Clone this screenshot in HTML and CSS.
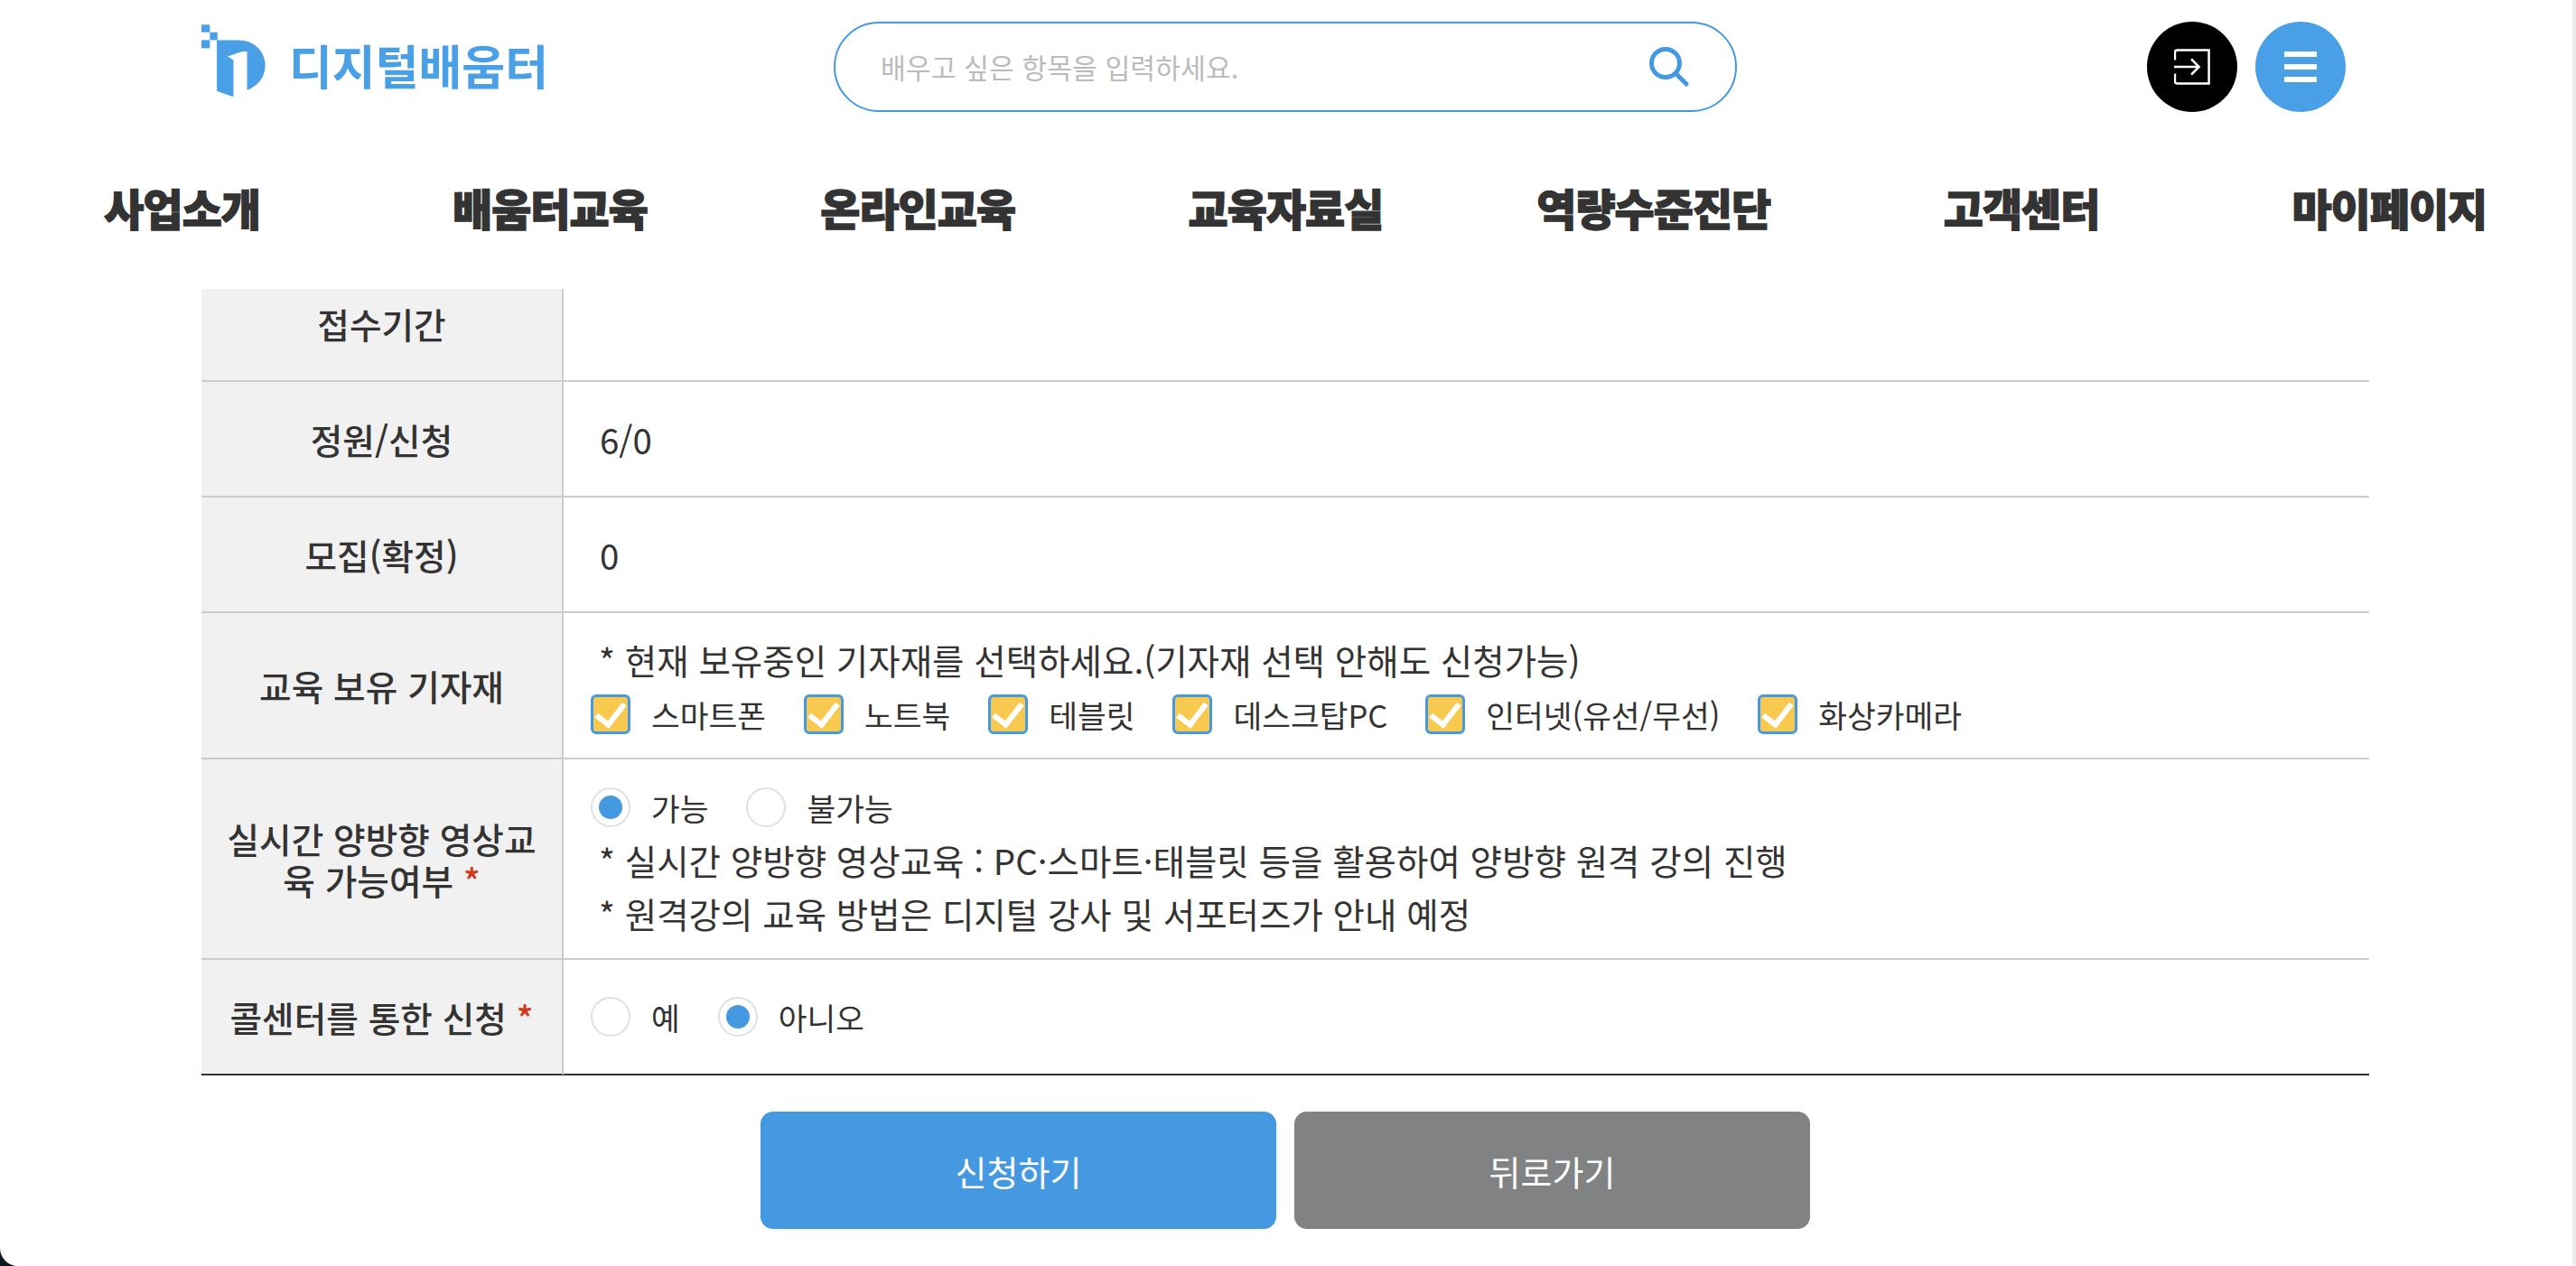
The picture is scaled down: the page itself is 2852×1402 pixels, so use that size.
FILE: index.html
```html
<!DOCTYPE html>
<html lang="ko">
<head>
  <meta charset="UTF-8">
  <title>디지털배움터</title>
  <link rel="stylesheet" href="styles.css">
</head>
<body>
  <div class="page">
    <header class="top">
      <a class="logo" href="#">
        <svg class="logo-mark" viewBox="129 80 212 242" aria-hidden="true">
          <rect x="129" y="81" width="28" height="25" />
          <rect x="157" y="106" width="25" height="26" />
          <rect x="129" y="132" width="28" height="27" />
          <path d="M180 132H252C304 132 340 170 340 215C340 255 315 285 280 297V170H265L215 186L235 198V320L180 300Z" />
        </svg>
        <span class="logo-text">디지털배움터</span>
      </a>
      <form class="search">
        <input type="text" placeholder="배우고 싶은 항목을 입력하세요.">
        <button type="button" class="search-btn" aria-label="검색">
          <svg viewBox="0 0 46 46" width="46" height="46" fill="none" stroke="#4499e0" stroke-width="5" stroke-linecap="round">
            <circle cx="19" cy="19" r="15.5" />
            <path d="M30 30L42 42" />
          </svg>
        </button>
      </form>
      <div class="top-icons">
        <a class="round-btn black" href="#" aria-label="로그인">
          <svg viewBox="0 0 42 42" width="40" height="40" fill="none" stroke="#fff" stroke-width="2.6">
            <path d="M1 13V4.500Q1 1.500 4 1.500H40.500V40.500H4Q1 40.500 1 37.500V29" />
            <path d="M0 21H28M20 12L29 21L20 30" />
          </svg>
        </a>
        <a class="round-btn blue" href="#" aria-label="메뉴">
          <span class="bars"><i></i><i></i><i></i></span>
        </a>
      </div>
    </header>

    <nav class="gnb">
      <a href="#">사업소개</a>
      <a href="#">배움터교육</a>
      <a href="#">온라인교육</a>
      <a href="#">교육자료실</a>
      <a href="#">역량수준진단</a>
      <a href="#">고객센터</a>
      <a href="#">마이페이지</a>
    </nav>

    <main class="content">
      <div class="table-clip">
        <table class="apply-table">
          <tr>
            <th>접수기간</th>
            <td></td>
          </tr>
          <tr>
            <th>정원/신청</th>
            <td class="value">6/0</td>
          </tr>
          <tr>
            <th>모집(확정)</th>
            <td class="value">0</td>
          </tr>
          <tr class="row-device">
            <th>교육 보유 기자재</th>
            <td>
              <p class="note">* 현재 보유중인 기자재를 선택하세요.(기자재 선택 안해도 신청가능)</p>
              <div class="options">
                <label><input type="checkbox" checked>스마트폰</label>
                <label><input type="checkbox" checked>노트북</label>
                <label><input type="checkbox" checked>테블릿</label>
                <label><input type="checkbox" checked>데스크탑PC</label>
                <label><input type="checkbox" checked>인터넷(유선/무선)</label>
                <label><input type="checkbox" checked>화상카메라</label>
              </div>
            </td>
          </tr>
          <tr class="row-live">
            <th>실시간 양방향 영상교육 가능여부 <em>*</em></th>
            <td>
              <div class="options">
                <label><input type="radio" name="live" checked>가능</label>
                <label><input type="radio" name="live">불가능</label>
              </div>
              <p class="note note-first">* 실시간 양방향 영상교육 : PC·스마트·태블릿 등을 활용하여 양방향 원격 강의 진행</p>
              <p class="note">* 원격강의 교육 방법은 디지털 강사 및 서포터즈가 안내 예정</p>
            </td>
          </tr>
          <tr class="row-last">
            <th>콜센터를 통한 신청 <em>*</em></th>
            <td>
              <div class="options">
                <label><input type="radio" name="call">예</label>
                <label><input type="radio" name="call" checked>아니오</label>
              </div>
            </td>
          </tr>
        </table>
      </div>

      <div class="buttons">
        <button type="button" class="btn btn-apply">신청하기</button>
        <button type="button" class="btn btn-back">뒤로가기</button>
      </div>
    </main>
  </div>
</body>
</html>
```

FILE: styles.css
```css
* {
  box-sizing: border-box;
}

html {
  background-color: #0b1a22;
}

body {
  width: 2852px;
  height: 1402px;
  margin: 0;
  padding-right: 2px;
  overflow: hidden;
  background-color: #fff;
  border-right: 4px solid #ececec;
  border-bottom-left-radius: 20px;
  font-family: "Noto Sans CJK KR", "Noto Sans", sans-serif;
  color: #333;
}

.page {
  width: 2846px;
}

a {
  color: inherit;
  text-decoration: none;
}

/* top row */
.top {
  display: flex;
  align-items: center;
  height: 124px;
  padding: 24px 249px 0 223px;
}

.logo {
  display: flex;
  align-items: center;
  width: 700px;
  color: #4aa0e6;
}

.logo-mark {
  width: 71px;
  height: 81px;
  margin-bottom: 14px;
  fill: #4aa0e6;
}

.logo-text {
  margin: 0 0 4px 26px;
  font-size: 52px;
  font-weight: 700;
  line-height: 1;
}

.search {
  display: flex;
  align-items: center;
  width: 1000px;
  height: 100px;
  padding: 0 50px;
  border: 2px solid #4499e0;
  border-radius: 50px;
}

.search input {
  flex: 1;
  border: 0;
  outline: 0;
  padding: 0;
  font-family: inherit;
  font-size: 30.3px;
}

.search input::placeholder {
  color: #bbb;
}

.search-btn {
  display: flex;
  padding: 0;
  border: 0;
  background: none;
}

.top-icons {
  display: flex;
  gap: 20px;
  margin-left: auto;
}

.round-btn {
  display: flex;
  align-items: center;
  justify-content: center;
  width: 100px;
  height: 100px;
  border-radius: 50%;
}

.round-btn.black {
  background-color: #000;
}

.round-btn.blue {
  background-color: #4aa0e6;
}

.bars {
  display: flex;
  flex-direction: column;
  gap: 8px;
  width: 36px;
}

.bars i {
  height: 6px;
  background-color: #fff;
}

/* menu */
.gnb {
  display: grid;
  grid-template-columns: repeat(7, 1fr);
  width: 2851px;
  height: 196px;
  margin-left: -2px;
  padding-top: 14px;
  align-items: center;
  text-align: center;
  font-size: 48px;
  font-weight: 900;
  letter-spacing: -1px;
  -webkit-text-stroke: 1.3px #333;
}

/* table */
.content {
  width: 2400px;
  margin-left: 223px;
}

.table-clip {
  height: 873px;
  overflow: hidden;
}

.apply-table {
  width: 100%;
  margin-top: -25px;
  border-collapse: separate;
  border-spacing: 0;
  table-layout: fixed;
  font-size: 38.5px;
}

.apply-table th,
.apply-table td {
  height: 128px;
  border-bottom: 2px solid #ccc;
}

.apply-table th {
  width: 401px;
  padding: 0 20px;
  background-color: #f1f1f1;
  border-right: 2px solid #ccc;
  font-size: 38.7px;
  font-weight: 500;
  line-height: 46px;
  word-break: break-all;
}

.apply-table th em {
  font-style: normal;
  color: #d03a1c;
}

.apply-table td {
  padding: 0 0 0 30px;
}

.apply-table td.value {
  padding-left: 40px;
}

.row-device th,
.row-device td {
  height: 162px;
}

.row-device td {
  padding-bottom: 3px;
}

.row-device .options {
  margin-top: 6px;
}

.row-live th,
.row-live td {
  height: 222px;
}

.row-live td {
  padding-top: 7px;
}

.row-last th,
.row-last td {
  border-bottom-color: #333;
}

.note {
  margin: 0;
  padding-left: 9px;
  line-height: 60px;
}

.note-first {
  margin: 3px 0 -1px;
}

.options {
  display: flex;
  gap: 42px;
  font-size: 34.5px;
}

.options label {
  display: flex;
  align-items: center;
  gap: 23px;
}

.options input {
  display: grid;
  place-items: center;
  width: 44px;
  height: 44px;
  margin: 0;
  appearance: none;
  background-color: #fff;
}

.options input[type="checkbox"] {
  background-color: #f7c94f;
  border: 3px solid #4499e0;
  border-radius: 6px;
}

.options input[type="checkbox"]::after {
  content: "";
  width: 14px;
  height: 26px;
  margin-top: -6px;
  border: solid #fff;
  border-width: 0 6px 6px 0;
  transform: rotate(38deg);
}

.options input[type="radio"] {
  border: 2px solid #e0e0e0;
  border-radius: 50%;
}

.options input[type="radio"]:checked::after {
  content: "";
  width: 26px;
  height: 26px;
  border-radius: 50%;
  background-color: #4499e0;
}

/* buttons */
.buttons {
  display: flex;
  justify-content: center;
  gap: 20px;
  margin-top: 38px;
}

.btn {
  width: 571px;
  height: 130px;
  border: 0;
  border-radius: 14px;
  color: #fff;
  font-family: inherit;
  font-size: 38px;
}

.btn-apply {
  background-color: #4499e0;
}

.btn-back {
  background-color: #808283;
}
```
